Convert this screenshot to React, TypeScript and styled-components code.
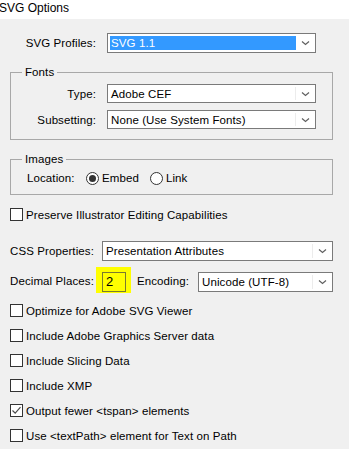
import React from 'react';
import styled, { createGlobalStyle } from 'styled-components';

const GlobalStyle = createGlobalStyle`
  html, body {
    margin: 0;
    padding: 0;
    background: #f0f0f0;
  }
  body {
    font-family: 'Liberation Sans', Arial, sans-serif;
    font-size: 11.5px;
    letter-spacing: 0.1px;
    color: #000;
    overflow: hidden;
  }
`;

const Chevron: React.FC = () => (
  <svg width="9" height="6" viewBox="0 0 9 6">
    <path d="M1 1.5 L4.5 4.5 L8 1.5" fill="none" stroke="#606060" strokeWidth="1.2" />
  </svg>
);

type SelectProps = { value: string; width: number; height?: number; selected?: boolean };

const SelectBox: React.FC<SelectProps> = ({ value, width, height = 20, selected }) => (
  <Select $width={width} $height={height}>
    <SelectValue $selected={selected}>{value}</SelectValue>
    <SelectArrow>
      <Chevron />
    </SelectArrow>
  </Select>
);

const CheckRow: React.FC<{ label: string; checked?: boolean }> = ({ label, checked }) => (
  <CheckLine>
    <CheckBox>
      {checked && (
        <svg width="11" height="11" viewBox="0 0 11 11">
          <path d="M1.5 5.5 L4.2 8.2 L9.5 2.2" fill="none" stroke="#4a4a4a" strokeWidth="1.2" />
        </svg>
      )}
    </CheckBox>
    <span>{label}</span>
  </CheckLine>
);

const Radio: React.FC<{ label: string; checked?: boolean }> = ({ label, checked }) => (
  <RadioOption>
    <RadioCircle>{checked && <RadioDot />}</RadioCircle>
    <span>{label}</span>
  </RadioOption>
);

const App: React.FC = () => {
  return (
    <>
      <GlobalStyle />
      <TitleBar>SVG Options</TitleBar>
      <Body>
        <ProfileRow>
          <FieldLabel>SVG Profiles:</FieldLabel>
          <SelectBox value="SVG 1.1" width={209} selected />
        </ProfileRow>

        <Group>
          <Legend>Fonts</Legend>
          <GroupRows>
            <GroupRow>
              <FieldLabel>Type:</FieldLabel>
              <SelectBox value="Adobe CEF" width={209} height={19} />
            </GroupRow>
            <GroupRow>
              <FieldLabel>Subsetting:</FieldLabel>
              <SelectBox value="None (Use System Fonts)" width={209} height={19} />
            </GroupRow>
          </GroupRows>
        </Group>

        <Group $gap={13}>
          <Legend>Images</Legend>
          <LocationRow>
            <LocationLabel>Location:</LocationLabel>
            <Radio label="Embed" checked />
            <Radio label="Link" />
          </LocationRow>
        </Group>

        <Checks $top={13}>
          <CheckRow label="Preserve Illustrator Editing Capabilities" />
        </Checks>

        <CssRow>
          <PlainLabel $width={92}>CSS Properties:</PlainLabel>
          <SelectBox value="Presentation Attributes" width={231} />
        </CssRow>

        <DecimalRow>
          <PlainLabel $width={86}>Decimal Places:</PlainLabel>
          <Highlight>
            <NumberInput>2</NumberInput>
          </Highlight>
          <EncodingLabel>Encoding:</EncodingLabel>
          <SelectBox value="Unicode (UTF-8)" width={135} />
        </DecimalRow>

        <Checks $top={11}>
          <CheckRow label="Optimize for Adobe SVG Viewer" />
          <CheckRow label="Include Adobe Graphics Server data" />
          <CheckRow label="Include Slicing Data" />
          <CheckRow label="Include XMP" />
          <CheckRow label="Output fewer <tspan> elements" checked />
          <CheckRow label="Use <textPath> element for Text on Path" />
        </Checks>
      </Body>
    </>
  );
};

const TitleBar = styled.div`
  height: 19px;
  line-height: 16px;
  background: #fff;
  font-size: 12px;
  letter-spacing: 0;
  text-indent: -1px;
`;

const Body = styled.div`
  padding: 0 16px 0 10px;
  display: flex;
  flex-direction: column;
`;

const ProfileRow = styled.div`
  display: grid;
  grid-template-columns: 86px 209px;
  column-gap: 11px;
  align-items: center;
  margin-top: 14px;
`;

const FieldLabel = styled.div`
  text-align: right;
`;

const PlainLabel = styled.div<{ $width: number }>`
  width: ${(p) => p.$width}px;
  flex: none;
  white-space: nowrap;
`;

const Select = styled.div<{ $width: number; $height: number }>`
  box-sizing: border-box;
  width: ${(p) => p.$width}px;
  height: ${(p) => p.$height}px;
  border: 1px solid #7a7a7a;
  background: #fff;
  display: flex;
  align-items: stretch;
  flex: none;
`;

const SelectValue = styled.div<{ $selected?: boolean }>`
  flex: 1;
  margin: 2px 0 2px 2px;
  padding-left: 1px;
  display: flex;
  align-items: center;
  background: ${(p) => (p.$selected ? '#3399ff' : '#fff')};
  color: ${(p) => (p.$selected ? '#fff' : '#000')};
  border-right: ${(p) => (p.$selected ? 'none' : '1px solid #ececec')};
  white-space: nowrap;
`;

const SelectArrow = styled.div`
  width: 19px;
  display: flex;
  align-items: center;
  justify-content: center;
`;

const Group = styled.fieldset<{ $gap?: number }>`
  margin: ${(p) => p.$gap ?? 13}px 0 0;
  padding: 0;
  border: 1px solid #a8a8a8;
  min-width: 0;
`;

const Legend = styled.legend`
  margin-left: 11px;
  padding: 0 3px;
  line-height: 13px;
`;

const GroupRows = styled.div`
  display: flex;
  flex-direction: column;
  gap: 7px;
  padding: 5px 0 10px;
`;

const GroupRow = styled.div`
  display: grid;
  grid-template-columns: 85px 209px;
  column-gap: 11px;
  align-items: center;
`;

const LocationRow = styled.div`
  display: flex;
  align-items: center;
  height: 14px;
  padding: 5px 0 9px 16px;
`;

const LocationLabel = styled.div`
  width: 59px;
`;

const RadioOption = styled.div`
  display: flex;
  align-items: center;
  gap: 3px;
  & + & {
    margin-left: 11px;
  }
`;

const RadioCircle = styled.div`
  box-sizing: border-box;
  width: 13px;
  height: 13px;
  border: 1px solid #333;
  border-radius: 50%;
  background: #fff;
  display: flex;
  align-items: center;
  justify-content: center;
`;

const RadioDot = styled.div`
  width: 7px;
  height: 7px;
  border-radius: 50%;
  background: #333;
`;

const Checks = styled.div<{ $top: number }>`
  display: flex;
  flex-direction: column;
  gap: 12px;
  margin-top: ${(p) => p.$top}px;
`;

const CheckLine = styled.div`
  display: flex;
  align-items: center;
  gap: 3px;
  height: 13px;
  white-space: nowrap;
`;

const CheckBox = styled.div`
  box-sizing: border-box;
  width: 13px;
  height: 13px;
  border: 1px solid #333;
  background: #fff;
  display: flex;
  align-items: center;
  justify-content: center;
  flex: none;
`;

const CssRow = styled.div`
  display: flex;
  align-items: center;
  margin-top: 20px;
`;

const DecimalRow = styled.div`
  display: flex;
  align-items: flex-start;
  margin-top: 6px;

  & > ${PlainLabel} {
    margin-top: 8px;
  }
  & > ${Select} {
    margin-top: 5px;
  }
`;

const Highlight = styled.div`
  background: #ffff00;
  padding: 5px 5px 1px 6px;
  flex: none;
`;

const NumberInput = styled.div`
  box-sizing: border-box;
  width: 24px;
  height: 20px;
  border: 1px solid #7a7a30;
  padding-left: 3px;
  font-size: 13px;
  line-height: 18px;
`;

const EncodingLabel = styled.div`
  width: 61px;
  margin: 8px 0 0 6px;
  flex: none;
`;

export default App;
